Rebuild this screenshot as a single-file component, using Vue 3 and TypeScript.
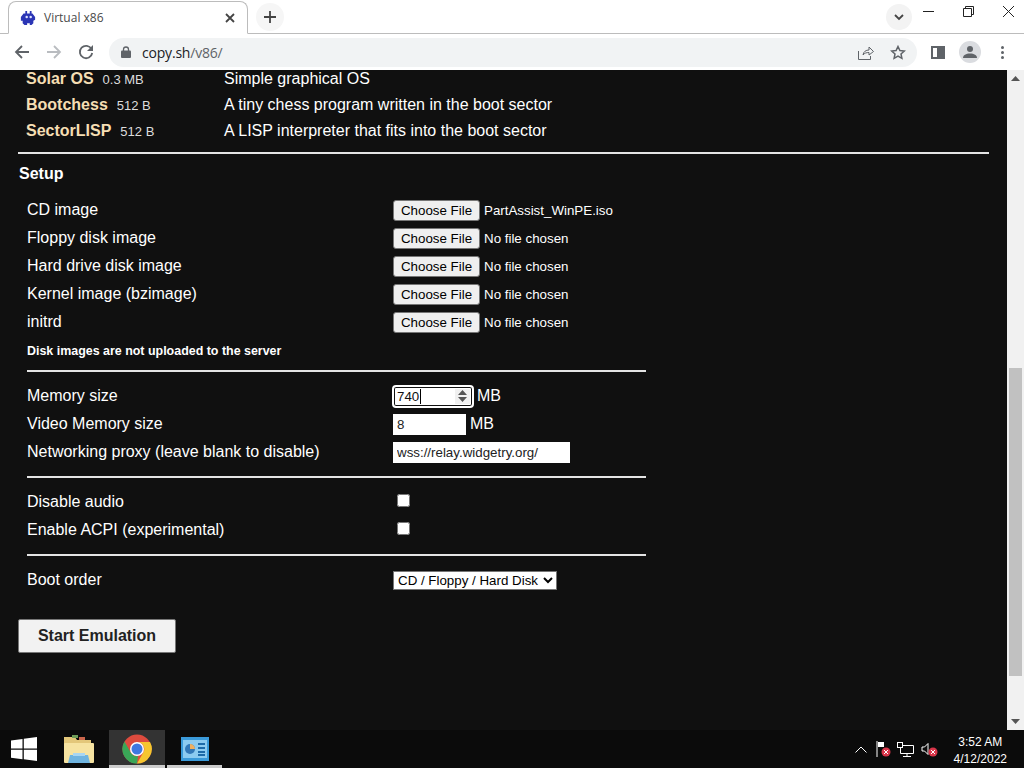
<script setup lang="ts">
const demos = [
  { name: "Solar OS", size: "0.3 MB", desc: "Simple graphical OS" },
  { name: "Bootchess", size: "512 B", desc: "A tiny chess program written in the boot sector" },
  { name: "SectorLISP", size: "512 B", desc: "A LISP interpreter that fits into the boot sector" },
];
const files = [
  { label: "CD image", file: "PartAssist_WinPE.iso" },
  { label: "Floppy disk image", file: "No file chosen" },
  { label: "Hard drive disk image", file: "No file chosen" },
  { label: "Kernel image (bzimage)", file: "No file chosen" },
  { label: "initrd", file: "No file chosen" },
];
</script>

<template>
  <div class="screen">
    <header class="strip">
      <div class="tab">
        <svg class="favicon" width="16" height="16" viewBox="0 0 18 18">
          <path fill="#2b35b5" d="M4 4h2V1h2v3h3V1h2v3h1l3 4v3l-2 1v3l-2 2h-2v-2H8v2H5l-2-2v-3H1V8z" />
          <circle cx="7.500" cy="8" r="1.400" fill="#dfe4ff" />
          <circle cx="12" cy="8" r="1.400" fill="#dfe4ff" />
        </svg>
        <span class="tab-title">Virtual x86</span>
        <svg class="tab-close" width="10" height="10" viewBox="0 0 10 10">
          <path d="M1 1l8 8M9 1l-8 8" stroke="#444" stroke-width="1.800" />
        </svg>
      </div>
      <div class="new-tab">
        <svg width="14" height="14" viewBox="0 0 14 14">
          <path d="M7 1v12M1 7h12" stroke="#444" stroke-width="1.800" />
        </svg>
      </div>
      <div class="strip-right">
        <div class="tab-search">
          <svg width="10" height="7" viewBox="0 0 10 7">
            <path d="M1 1l4 4 4-4" fill="none" stroke="#444" stroke-width="1.800" />
          </svg>
        </div>
        <div class="win-btn">
          <svg width="11" height="11" viewBox="0 0 11 11"><path d="M0 5.500h11" stroke="#222" /></svg>
        </div>
        <div class="win-btn">
          <svg width="11" height="11" viewBox="0 0 11 11">
            <path d="M.5 2.500h8v8h-8zM2.500 2.500v-2h8v8h-2" fill="none" stroke="#222" />
          </svg>
        </div>
        <div class="win-btn">
          <svg width="11" height="11" viewBox="0 0 11 11"><path d="M0 0l11 11M11 0L0 11" stroke="#222" /></svg>
        </div>
      </div>
    </header>

    <nav class="toolbar">
      <svg class="nav-icon" width="16" height="16" viewBox="0 0 16 16">
        <path d="M15 8H2M8 2L2 8l6 6" fill="none" stroke="#5f6368" stroke-width="1.800" />
      </svg>
      <svg class="nav-icon" width="16" height="16" viewBox="0 0 16 16">
        <path d="M1 8h13M8 2l6 6-6 6" fill="none" stroke="#b9bcc0" stroke-width="1.800" />
      </svg>
      <svg class="nav-icon" width="16" height="16" viewBox="0 0 16 16">
        <path d="M13.500 5A6.200 6.200 0 1 0 14.200 9" fill="none" stroke="#5f6368" stroke-width="1.800" />
        <path d="M15 1v6H9z" fill="#5f6368" />
      </svg>
      <div class="omnibox">
        <svg width="10" height="12" viewBox="0 0 10 12">
          <path d="M2.500 5V3.500a2.500 2.500 0 0 1 5 0V5" fill="none" stroke="#5f6368" stroke-width="1.300" />
          <rect y="4.500" width="10" height="7.500" rx="1" fill="#5f6368" />
        </svg>
        <span class="url">copy.sh<span class="url-path">/v86/</span></span>
        <span class="omni-right">
          <svg width="16" height="15" viewBox="0 0 16 15">
            <path d="M.5 6v8.500h12V11M5 10c.5-3.500 3-5 6-5V2l4.500 4.500L11 10V7.500C8.500 7.500 6.500 8 5 10z" fill="none" stroke="#5f6368" />
          </svg>
          <svg width="16" height="15" viewBox="0 0 16 15">
            <path d="M8 1.500l1.900 4 4.400.5-3.300 3 .9 4.400L8 11.200l-3.900 2.200.9-4.400-3.300-3 4.400-.5z" fill="none" stroke="#5f6368" stroke-width="1.500" />
          </svg>
        </span>
      </div>
      <div class="side-panel"><span></span></div>
      <div class="avatar">
        <svg width="14" height="14" viewBox="0 0 14 14">
          <circle cx="7" cy="4" r="3" fill="#5f6368" />
          <path d="M0 13c0-3 3-4.500 7-4.500s7 1.500 7 4.500z" fill="#5f6368" />
        </svg>
      </div>
      <div class="kebab"><i></i><i></i><i></i></div>
    </nav>

    <div class="viewport">
      <main class="page">
        <div class="demo" v-for="d in demos" :key="d.name">
          <div class="demo-name"><b>{{ d.name }}</b><small>{{ d.size }}</small></div>
          <div>{{ d.desc }}</div>
        </div>
        <hr class="rule-wide" />
        <h4 class="setup-title">Setup</h4>
        <section class="setup">
          <div class="row" v-for="f in files" :key="f.label">
            <span>{{ f.label }}</span>
            <span class="file">
              <button class="file-btn" type="button">Choose File</button>
              <span class="file-name">{{ f.file }}</span>
            </span>
          </div>
          <p class="note">Disk images are not uploaded to the server</p>
          <hr class="rule" />
          <div class="row">
            <span>Memory size</span>
            <span class="control">
              <span class="num-focused">
                <span class="num-value">740</span>
                <span class="spin">
                  <svg width="9" height="12" viewBox="0 0 9 12">
                    <path d="M4.500 0L9 5H0zM4.500 12L0 7h9z" fill="#555" />
                  </svg>
                </span>
              </span>
              <span>MB</span>
            </span>
          </div>
          <div class="row">
            <span>Video Memory size</span>
            <span class="control">
              <input class="field field-num" type="text" value="8" readonly />
              <span>MB</span>
            </span>
          </div>
          <div class="row">
            <span>Networking proxy (leave blank to disable)</span>
            <input class="field field-url" type="text" value="wss://relay.widgetry.org/" readonly />
          </div>
          <hr class="rule" />
          <div class="row">
            <span>Disable audio</span>
            <span class="check"><input type="checkbox" /></span>
          </div>
          <div class="row">
            <span>Enable ACPI (experimental)</span>
            <span class="check"><input type="checkbox" /></span>
          </div>
          <hr class="rule" />
          <div class="row">
            <span>Boot order</span>
            <select class="boot">
              <option>CD / Floppy / Hard Disk</option>
            </select>
          </div>
        </section>
        <button class="start" type="button">Start Emulation</button>
      </main>
      <aside class="scrollbar">
        <svg width="9" height="5" viewBox="0 0 9 5"><path d="M4.500 0L9 5H0z" fill="#555" /></svg>
        <div class="track"><div class="thumb"></div></div>
        <svg width="9" height="5" viewBox="0 0 9 5"><path d="M4.500 5L0 0h9z" fill="#555" /></svg>
      </aside>
    </div>

    <footer class="taskbar">
      <div class="start-logo">
        <svg width="26" height="24" viewBox="0 0 26 24">
          <path fill="#fff" d="M0 3.500l11.500-1.600v9.600H0zM12.800 1.700L26 0v11.500H12.800zM0 12.800h11.500v9.500L0 20.700zM12.800 12.800H26V24l-13.200-1.800z" />
        </svg>
      </div>
      <div class="task-item">
        <svg width="32" height="30" viewBox="0 0 32 30">
          <path fill="#e3c77a" d="M1 3h11l2 3h14v5H1z" />
          <rect x="9" y="1" width="6" height="3" fill="#6d9c58" />
          <rect x="16" y="3" width="6" height="3" fill="#c9654b" />
          <rect x="1" y="9" width="30" height="20" rx="1" fill="#f6e3a1" />
          <path fill="#6fb4e0" d="M7 21h18l2 8H5z" />
          <rect x="10" y="19" width="12" height="3" fill="#a8d6f2" />
        </svg>
      </div>
      <div class="task-item task-active">
        <svg width="30" height="30" viewBox="0 0 30 30">
          <circle cx="15" cy="15" r="14.500" fill="#dd4b3e" />
          <path fill="#f7c62f" d="M15 8h13a14.500 14.500 0 0 1-13 21.500L21 19a7 7 0 0 0-6-11z" />
          <path fill="#3aa757" d="M2.500 7.500L9 19a7 7 0 0 0 7 3l-1 7.500A14.500 14.500 0 0 1 2.500 7.500z" />
          <circle cx="15" cy="15" r="7" fill="#fff" />
          <circle cx="15" cy="15" r="5.500" fill="#3f78e0" />
        </svg>
      </div>
      <div class="task-item task-open">
        <svg width="28" height="24" viewBox="0 0 28 24">
          <rect width="28" height="24" fill="#3a9ad9" />
          <rect x="2" y="3" width="24" height="18" fill="#8ccbf0" />
          <circle cx="9" cy="12" r="5" fill="#3278b8" />
          <path d="M9 12V7a5 5 0 0 1 5 5z" fill="#f0b060" />
          <path d="M17 7h7M17 11h7M17 15h7M17 18h7" stroke="#1d6aa8" stroke-width="2" />
        </svg>
      </div>
      <div class="tray">
        <svg width="12" height="7" viewBox="0 0 12 7">
          <path d="M.5 6.500L6 1l5.500 5.500" fill="none" stroke="#fff" />
        </svg>
        <span class="tray-icon tray-flag">
          <svg width="16" height="16" viewBox="0 0 16 16">
            <path d="M1 0v16" stroke="#fff" />
            <path d="M2 1h6v5H2z" fill="#fff" />
            <circle cx="10" cy="11" r="4.500" fill="#d9364a" />
            <path d="M8 9l4 4M12 9l-4 4" stroke="#fff" />
          </svg>
        </span>
        <span class="tray-icon">
          <svg width="17" height="15" viewBox="0 0 17 15">
            <path d="M3.500 3.500h13v8h-13zM10 11.500v3M6 14.500h8" fill="none" stroke="#fff" />
            <rect x=".5" y=".5" width="5" height="5" fill="#0b0b0b" stroke="#fff" />
          </svg>
        </span>
        <span class="tray-icon">
          <svg width="17" height="15" viewBox="0 0 17 15">
            <path d="M1 5h2.500L7 1.500v11L3.500 9H1z" fill="none" stroke="#fff" />
            <circle cx="12" cy="10" r="4.500" fill="#d9364a" />
            <path d="M10 8l4 4M14 8l-4 4" stroke="#fff" />
          </svg>
        </span>
        <div class="clock">
          <span>3:52 AM</span>
          <span>4/12/2022</span>
        </div>
      </div>
    </footer>
  </div>
</template>

<style scoped>
.screen {
  width: 1024px;
  height: 768px;
  display: flex;
  flex-direction: column;
  overflow: hidden;
  font-family: "Liberation Sans", Arial, sans-serif;
  background: #101010;
}

.strip {
  height: 34px;
  flex: none;
  display: flex;
  align-items: flex-end;
  background: #fff;
  border-bottom: 1px solid #bcbcbc;
  box-sizing: border-box;
  padding-left: 8px;
}
.tab {
  width: 240px;
  height: 33px;
  margin-bottom: -1px;
  box-sizing: border-box;
  display: flex;
  align-items: center;
  background: #fff;
  border: 1px solid #bcbcbc;
  border-bottom: 1px solid #fff;
  border-radius: 8px 8px 0 0;
  padding: 0 12px 0 11px;
}
.favicon { flex: none; }
.tab-title {
  margin-left: 8px;
  font-family: "Open Sans", "Liberation Sans", sans-serif;
  font-size: 12px;
  color: #4a4a4a;
}
.tab-close { margin-left: auto; }
.new-tab {
  width: 28px;
  height: 28px;
  margin: 0 0 2px 8px;
  border-radius: 50%;
  background: #f6f6f6;
  display: flex;
  align-items: center;
  justify-content: center;
}
.strip-right {
  margin-left: auto;
  align-self: stretch;
  display: flex;
}
.tab-search {
  width: 26px;
  height: 26px;
  margin: 4px 1px 0 0;
  border-radius: 50%;
  background: #f3f3f3;
  display: flex;
  align-items: center;
  justify-content: center;
}
.win-btn {
  width: 30px;
  height: 22px;
  display: flex;
  align-items: center;
  justify-content: center;
}
.win-btn + .win-btn { margin-left: 10px; }
.win-btn:last-child { margin-right: 1px; }

.toolbar {
  height: 36px;
  flex: none;
  display: flex;
  align-items: center;
  background: #fff;
  padding-left: 14px;
}
.nav-icon { margin-right: 16px; }
.nav-icon:nth-child(3) { margin-right: 15px; }
.omnibox {
  width: 808px;
  height: 29px;
  flex: none;
  box-sizing: border-box;
  display: flex;
  align-items: center;
  gap: 11px;
  padding: 0 11px 0 12px;
  background: #f1f3f4;
  border-radius: 15px;
}
.url { font-size: 14px; color: #202124; font-family: "Open Sans", "Liberation Sans", sans-serif; letter-spacing: -0.2px; }
.url-path { color: #5f6368; }
.omni-right {
  margin-left: auto;
  display: flex;
  gap: 16px;
  align-items: center;
}
.side-panel {
  width: 14px;
  height: 13px;
  flex: none;
  margin-left: 14px;
  box-sizing: border-box;
  border: 2px solid #5f6368;
  display: flex;
  justify-content: flex-end;
}
.side-panel span { width: 6px; background: #5f6368; }
.avatar {
  width: 22px;
  height: 22px;
  flex: none;
  margin-left: 14px;
  border-radius: 50%;
  background: #dadce0;
  display: flex;
  align-items: center;
  justify-content: center;
}
.kebab {
  margin-left: 20px;
  display: flex;
  flex-direction: column;
  gap: 2px;
}
.kebab i {
  width: 3px;
  height: 3px;
  border-radius: 50%;
  background: #5f6368;
}

.viewport {
  flex: 1;
  min-height: 0;
  display: flex;
  overflow: hidden;
}
.page {
  flex: 1;
  min-width: 0;
  margin-top: -4px;
  color: #fff;
  font-size: 16px;
  background: #101010;
}
.demo {
  height: 26px;
  display: flex;
  align-items: center;
}
.demo-name {
  width: 198px;
  padding-left: 26px;
  flex: none;
}
.demo-name b { color: #f5deb3; }
.demo-name small {
  margin-left: 9px;
  font-size: 13px;
  color: #ddd;
}
.rule-wide {
  margin: 8px 18px 0 18px;
  border: 0;
  border-top: 2px solid #e4e4e4;
}
.setup-title {
  margin: 11px 0 0 19px;
  font-size: 16px;
  line-height: 18px;
  font-weight: bold;
}
.setup {
  width: 619px;
  margin: 13px 0 0 27px;
  font-size: 16px;
}
.row {
  height: 28px;
  display: grid;
  grid-template-columns: 366px auto;
  align-items: center;
  justify-content: start;
}
.file {
  display: flex;
  align-items: center;
  gap: 4px;
  font-size: 13.33px;
}
.file-btn {
  width: 87px;
  height: 21px;
  padding: 0;
  font: 13.33px "Liberation Sans", Arial, sans-serif;
  color: #000;
  background: #efefef;
  border: 1px solid #767676;
  border-radius: 3px;
}
.note {
  margin: 6px 0 0;
  font-size: 12.45px;
  line-height: 18px;
  font-weight: bold;
}
.rule {
  margin: 10px 0;
  border: 0;
  border-top: 2px solid #e4e4e4;
}
.control {
  display: flex;
  align-items: center;
  gap: 4px;
}
.num-focused {
  width: 80px;
  height: 21px;
  box-sizing: border-box;
  display: flex;
  align-items: center;
  justify-content: space-between;
  padding: 0 2px 0 3px;
  background: #fff;
  color: #111;
  font-size: 13.33px;
  border: 1px solid #101010;
  border-radius: 3px;
  outline: 2px solid #fff;
  outline-offset: -1px;
  box-shadow: inset 0 0 0 1px #101010;
}
.num-value {
  border-right: 1px solid #000;
  padding-right: 1px;
  line-height: 15px;
}
.spin {
  display: flex;
  align-items: center;
  height: 15px;
  padding: 0 3px;
  background: #f0f0f0;
}
.field {
  height: 21px;
  box-sizing: border-box;
  padding: 1px 4px;
  border: 0;
  outline: 0;
  background: #fff;
  color: #222;
  font: 13.33px "Liberation Sans", Arial, sans-serif;
}
.field-num { width: 73px; }
.field-url { width: 177px; }
.check {
  display: flex;
  padding: 0 0 3px 4px;
}
.check input {
  width: 13px;
  height: 13px;
  margin: 0;
}
.boot {
  width: 164px;
  height: 19px;
  font: 13.33px "Liberation Sans", Arial, sans-serif;
  background: #fff;
  color: #000;
}
.start {
  display: block;
  width: 158px;
  height: 34px;
  margin: 25px 0 0 18px;
  padding: 0;
  font: bold 16px "Liberation Sans", Arial, sans-serif;
  color: #222;
  background: #f2f2f2;
  border: 1px solid #777;
  border-radius: 2px;
}

.scrollbar {
  width: 17px;
  flex: none;
  display: flex;
  flex-direction: column;
  align-items: center;
  background: #f1f1f1;
  padding: 6px 0;
  box-sizing: border-box;
}
.track {
  flex: 1;
  width: 100%;
  padding: 287px 2px 0;
  box-sizing: border-box;
}
.thumb {
  height: 308px;
  background: #c1c1c1;
}

.taskbar {
  height: 38px;
  flex: none;
  display: flex;
  align-items: center;
  background: #0b0b0b;
  color: #fff;
}
.start-logo {
  width: 47px;
  padding-left: 11px;
  box-sizing: border-box;
  display: flex;
}
.task-item {
  width: 55px;
  height: 38px;
  flex: none;
  box-sizing: border-box;
  display: flex;
  align-items: center;
  justify-content: center;
  margin-right: 2px;
}
.task-item:nth-child(2) { margin-left: 4px; margin-right: 3px; }
.task-active {
  background: #333;
  border-bottom: 3px solid #ccc;
  padding-top: 3px;
  width: 56px;
}
.task-open {
  border-bottom: 3px solid #ccc;
  padding-top: 3px;
}
.tray {
  margin-left: auto;
  display: flex;
  align-items: center;
  padding-right: 17px;
  height: 100%;
}
.tray-icon {
  display: flex;
  margin-left: 7px;
  width: 17px;
}
.tray-flag { margin-left: 9px; }
.tray-flag + .tray-icon { margin-left: 4px; }
.clock {
  margin-left: 16px;
  display: flex;
  flex-direction: column;
  align-items: center;
  font-size: 12px;
  line-height: 17px;
  padding-top: 4px;
}
</style>

<style>
html,
body {
  margin: 0;
  overflow: hidden;
}
</style>
